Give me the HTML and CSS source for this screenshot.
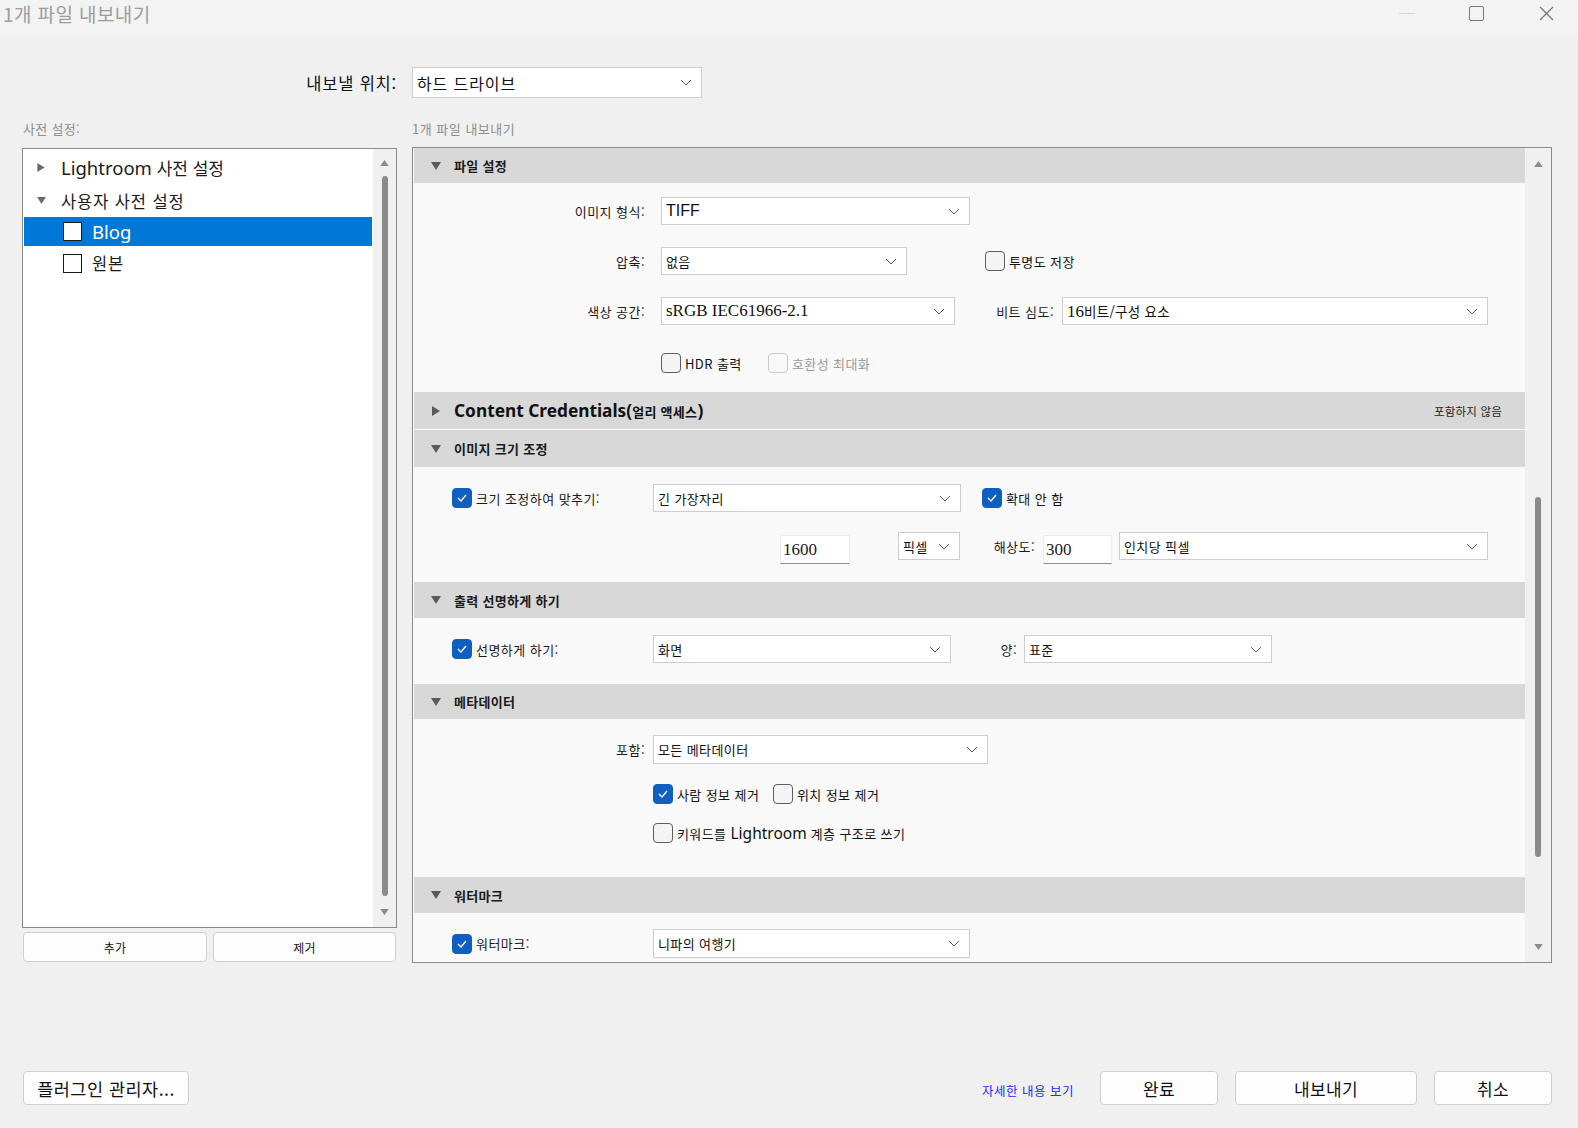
FILE: index.html
```html
<!DOCTYPE html>
<html lang="ko">
<head>
<meta charset="utf-8">
<title>1개 파일 내보내기</title>
<link rel="stylesheet" href="styles.css">
</head>
<body>
<div class="window">
  <div class="titlebar">
    <span class="title">1개 파일 내보내기</span>
    <div class="winctl">
      <span class="wc-min"></span>
      <span class="wc-max"></span>
      <svg class="wc-close" viewBox="0 0 15 15"><path d="M1 1 L14 14 M14 1 L1 14"/></svg>
    </div>
  </div>

  <div class="grid dest-row">
    <div class="dest-label">내보낼 위치:</div>
    <div class="dd dest-dd"><span>하드 드라이브</span><svg class="chev" viewBox="0 0 12 7"><polyline points="1,1 6,6 11,1"/></svg></div>
  </div>

  <div class="grid cap-row">
    <div class="cap">사전 설정:</div>
    <div class="cap cap-r">1개 파일 내보내기</div>
  </div>

  <div class="grid panels">
    <div class="left-col">
      <div class="preset-box">
        <div class="tree">
          <div class="trow r1"><svg class="ttri" viewBox="0 0 8 10"><polygon points="0,0 8,5 0,10"/></svg><span class="big">Lightroom</span><span class="kr17">&nbsp;사전 설정</span></div>
          <div class="trow r2"><svg class="ttri" viewBox="0 0 10 8"><polygon points="0,0 10,0 5,8"/></svg><span class="kr16">사용자 사전 설정</span></div>
          <div class="trow r3 sel"><span class="tcb"></span><span class="big">Blog</span></div>
          <div class="trow r4"><span class="tcb"></span><span class="kr16">원본</span></div>
        </div>
        <div class="vscroll lscroll">
          <svg class="sarrow" viewBox="0 0 10 7"><polygon points="0,7 10,7 5,0"/></svg>
          <div class="thumb lthumb"></div>
          <svg class="sarrow" viewBox="0 0 10 7"><polygon points="0,0 10,0 5,7"/></svg>
        </div>
      </div>
      <div class="preset-btns">
        <div class="btn small">추가</div>
        <div class="btn small">제거</div>
      </div>
    </div>

    <div class="settings-box">
      <div class="sections">
        <!-- 파일 설정 -->
        <div class="sh h1"><svg class="htri" viewBox="0 0 10 8"><polygon points="0,0 10,0 5,8"/></svg><span class="sh-t">파일 설정</span></div>
        <div class="sb b1">
          <div class="row ra">
            <div class="lbl w233">이미지 형식:</div>
            <div class="dd w309 ml14"><span class="sans16">TIFF</span><svg class="chev" viewBox="0 0 12 7"><polyline points="1,1 6,6 11,1"/></svg></div>
          </div>
          <div class="row rb">
            <div class="lbl w233">압축:</div>
            <div class="dd w246 ml14"><span>없음</span><svg class="chev" viewBox="0 0 12 7"><polyline points="1,1 6,6 11,1"/></svg></div>
            <div class="cbwrap ml78"><span class="cb"></span><span class="cbt">투명도 저장</span></div>
          </div>
          <div class="row rc">
            <div class="lbl w233">색상 공간:</div>
            <div class="dd w294 ml14"><span class="serif16">sRGB IEC61966-2.1</span><svg class="chev" viewBox="0 0 12 7"><polyline points="1,1 6,6 11,1"/></svg></div>
            <div class="lbl w101">비트 심도:</div>
            <div class="dd w426 ml6"><span><span class="serif16">16</span><span class="kr14">비트/구성 요소</span></span><svg class="chev" viewBox="0 0 12 7"><polyline points="1,1 6,6 11,1"/></svg></div>
          </div>
          <div class="row rd pl247">
            <div class="cbwrap w107"><span class="cb"></span><span class="cbt hdr">HDR</span><span class="cbt">&nbsp;출력</span></div>
            <div class="cbwrap"><span class="cb dis"></span><span class="cbt dist">호환성 최대화</span></div>
          </div>
        </div>

        <!-- Content Credentials -->
        <div class="sh h2"><svg class="htri r" viewBox="0 0 8 10"><polygon points="0,0 8,5 0,10"/></svg><span class="sh-t cc">Content Credentials(<span class="ccs">얼리 액세스</span>)</span><span class="sh-right">포함하지 않음</span></div>

        <!-- 이미지 크기 조정 -->
        <div class="sh h3"><svg class="htri" viewBox="0 0 10 8"><polygon points="0,0 10,0 5,8"/></svg><span class="sh-t">이미지 크기 조정</span></div>
        <div class="sb b3">
          <div class="row r3a pl38">
            <span class="cb on"><svg viewBox="0 0 12 10"><polyline points="2,5 5,8 10,2"/></svg></span>
            <div class="lbl-l w181">크기 조정하여 맞추기:</div>
            <div class="dd w308"><span>긴 가장자리</span><svg class="chev" viewBox="0 0 12 7"><polyline points="1,1 6,6 11,1"/></svg></div>
            <div class="cbwrap ml21"><span class="cb on"><svg viewBox="0 0 12 10"><polyline points="2,5 5,8 10,2"/></svg></span><span class="cbt">확대 안 함</span></div>
          </div>
          <div class="row r3b pl366">
            <div class="inp w70 mt3"><span class="serif16">1600</span></div>
            <div class="dd w62 ml48"><span>픽셀</span><svg class="chev" viewBox="0 0 12 7"><polyline points="1,1 6,6 11,1"/></svg></div>
            <div class="lbl w77 h28">해상도:</div>
            <div class="inp w69 ml6 mt3"><span class="serif16">300</span></div>
            <div class="dd w369 ml7"><span>인치당 픽셀</span><svg class="chev" viewBox="0 0 12 7"><polyline points="1,1 6,6 11,1"/></svg></div>
          </div>
        </div>

        <!-- 출력 선명하게 하기 -->
        <div class="sh h4"><svg class="htri" viewBox="0 0 10 8"><polygon points="0,0 10,0 5,8"/></svg><span class="sh-t">출력 선명하게 하기</span></div>
        <div class="sb b4">
          <div class="row r4a pl38">
            <span class="cb on"><svg viewBox="0 0 12 10"><polyline points="2,5 5,8 10,2"/></svg></span>
            <div class="lbl-l w181">선명하게 하기:</div>
            <div class="dd w298"><span>화면</span><svg class="chev" viewBox="0 0 12 7"><polyline points="1,1 6,6 11,1"/></svg></div>
            <div class="lbl w68">양:</div>
            <div class="dd w248 ml5"><span>표준</span><svg class="chev" viewBox="0 0 12 7"><polyline points="1,1 6,6 11,1"/></svg></div>
          </div>
        </div>

        <!-- 메타데이터 -->
        <div class="sh h5"><svg class="htri" viewBox="0 0 10 8"><polygon points="0,0 10,0 5,8"/></svg><span class="sh-t">메타데이터</span></div>
        <div class="sb b5">
          <div class="row r5a">
            <div class="lbl w233">포함:</div>
            <div class="dd w335 ml6"><span>모든 메타데이터</span><svg class="chev" viewBox="0 0 12 7"><polyline points="1,1 6,6 11,1"/></svg></div>
          </div>
          <div class="row r5b pl239">
            <div class="cbwrap w120"><span class="cb on"><svg viewBox="0 0 12 10"><polyline points="2,5 5,8 10,2"/></svg></span><span class="cbt">사람 정보 제거</span></div>
            <div class="cbwrap"><span class="cb"></span><span class="cbt">위치 정보 제거</span></div>
          </div>
          <div class="row r5c pl239">
            <div class="cbwrap"><span class="cb"></span><span class="cbt">키워드를 <span class="lr16">Lightroom</span> 계층 구조로 쓰기</span></div>
          </div>
        </div>

        <!-- 워터마크 -->
        <div class="sh h6"><svg class="htri" viewBox="0 0 10 8"><polygon points="0,0 10,0 5,8"/></svg><span class="sh-t">워터마크</span></div>
        <div class="sb b6">
          <div class="row r6a pl38">
            <span class="cb on"><svg viewBox="0 0 12 10"><polyline points="2,5 5,8 10,2"/></svg></span>
            <div class="lbl-l w181">워터마크:</div>
            <div class="dd w317"><span>니파의 여행기</span><svg class="chev" viewBox="0 0 12 7"><polyline points="1,1 6,6 11,1"/></svg></div>
          </div>
        </div>
      </div>
      <div class="vscroll rscroll">
        <svg class="sarrow" viewBox="0 0 10 7"><polygon points="0,7 10,7 5,0"/></svg>
        <div class="thumb rthumb"></div>
        <svg class="sarrow rdown" viewBox="0 0 10 7"><polygon points="0,0 10,0 5,7"/></svg>
      </div>
    </div>
  </div>

  <div class="footer">
    <div class="btn big-btn plugin">플러그인 관리자...</div>
    <div class="spacer"></div>
    <div class="link">자세한 내용 보기</div>
    <div class="btn big-btn done">완료</div>
    <div class="btn big-btn export">내보내기</div>
    <div class="btn big-btn cancel">취소</div>
  </div>
</div>
</body>
</html>
```

FILE: styles.css
```css
* { box-sizing: border-box; }
html, body { margin: 0; padding: 0; }
body {
  width: 1578px;
  height: 1128px;
  overflow: hidden;
  background: #f0f0f0;
  font-family: "Noto Sans", "Noto Sans CJK KR", sans-serif;
  color: #1b1b1b;
}
.window { width: 1578px; height: 1128px; }

/* title bar */
.titlebar {
  height: 36px;
  background: #f3f3f3;
  display: flex;
  align-items: center;
  justify-content: space-between;
  padding-left: 3px;
}
.title {
  font-family: "Noto Sans CJK KR", sans-serif;
  font-size: 19px;
  color: #9d9d9d;
  letter-spacing: 0.4px;
  margin-top: -10px;
}
.winctl {
  display: flex;
  align-items: center;
  height: 36px;
  margin-top: -9px;
}
.wc-min { width: 16px; height: 1px; background: #d6d6d6; margin-right: 54px; }
.wc-max { width: 15px; height: 15px; border: 1.5px solid #7a7a7a; border-radius: 2px; margin-right: 55px; }
.wc-close { width: 15px; height: 15px; margin-right: 24px; }
.wc-close path { stroke: #7a7a7a; stroke-width: 1.3; fill: none; }

/* shared grid */
.grid {
  display: grid;
  grid-template-columns: 375px 1140px;
  column-gap: 15px;
  padding-left: 22px;
}

.dest-row { margin-top: 31px; height: 31px; align-items: center; }
.dest-label {
  text-align: right;
  font-family: "Noto Sans CJK KR", sans-serif;
  font-size: 16.5px;
  letter-spacing: 0.8px;
  color: #111;
}
.dd.dest-dd { width: 290px; height: 31px; font-size: 16px; letter-spacing: 0.9px; }

.cap-row { margin-top: 21px; height: 18px; align-items: center; }
.cap {
  font-family: "Noto Sans CJK KR", sans-serif;
  font-size: 13px;
  letter-spacing: 0.3px;
  color: #8e8e8e;
  padding-left: 1px;
}
.cap-r { letter-spacing: 0.5px; padding-left: 0; }

.panels { margin-top: 10px; align-items: start; }

/* left */
.preset-box {
  margin-top: 1px;
  height: 780px;
  border: 1px solid #8a8a8a;
  background: #fff;
  display: flex;
}
.tree { width: 350px; padding: 2px 1px 0 1px; }
.trow {
  display: flex;
  align-items: center;
  height: 33px;
  font-family: "Noto Sans CJK KR", sans-serif;
  white-space: nowrap;
}
.trow.r3 { height: 29px; }
.trow.r4 { height: 34px; }
.ttri { width: 8px; height: 9px; margin-left: 13px; margin-right: 16px; fill: #6a6a6a; }
.trow.r2 .ttri { width: 9px; height: 7px; margin-left: 13px; margin-right: 15px; }
.big { font-family: "Noto Sans", sans-serif; font-size: 18.5px; }
.kr17 { font-size: 17px; }
.kr16 { font-size: 16.5px; letter-spacing: 0.9px; }
.sel { background: #0078d7; color: #fff; }
.tcb {
  width: 19px; height: 19px;
  border: 1.5px solid #1a1a1a;
  background: #fff;
  margin-left: 39px;
  margin-right: 10px;
  flex: none;
}

.vscroll {
  background: #f0f0f0;
  display: flex;
  flex-direction: column;
  align-items: center;
}
.lscroll { width: 23px; padding: 11px 0 8px; }
.sarrow { width: 9px; height: 6px; fill: #8a8a8a; flex: none; }
.thumb { width: 6px; background: #8a8a8a; border-radius: 3px; }
.lthumb { height: 720px; margin-top: 10px; }
.lscroll .sarrow:last-child { margin-top: 13px; }

.preset-btns { display: flex; gap: 6px; margin-top: 4px; padding-left: 1px; }
.btn {
  background: #fdfdfd;
  border: 1px solid #cfcfcf;
  border-radius: 4px;
  display: flex;
  align-items: center;
  justify-content: center;
  font-family: "Noto Sans CJK KR", sans-serif;
  color: #111;
}
.btn.small { width: 184px; height: 30px; font-size: 12px; letter-spacing: 0.3px; }
.btn.small + .btn.small { width: 183px; }

/* right */
.settings-box {
  height: 816px;
  border: 1px solid #8a8a8a;
  background: #f9f9f9;
  display: flex;
  overflow: hidden;
}
.sections { width: 1112px; padding-left: 1px; flex: none; }
.rscroll { width: 26px; padding: 13px 0 0; flex: none; }
.rthumb { height: 360px; margin-top: 330px; }
.rdown { margin-top: 87px; }

.sh {
  background: #d8d8d8;
  display: flex;
  align-items: center;
  height: 36px;
  padding-left: 17px;
}
.h1 { height: 35px; }
.h2 { height: 37px; }
.h3 { height: 37px; margin-top: 1px; }
.h5 { height: 35px; }
.htri { width: 10px; height: 8px; fill: #5a5a5a; margin-right: 13px; flex: none; }
.htri.r { width: 8px; height: 10px; margin-left: 1px; margin-right: 14px; }
.sh-t {
  font-family: "Noto Sans CJK KR", sans-serif;
  font-size: 13px;
  letter-spacing: 0.3px;
  font-weight: 700;
  color: #1a1a1a;
}
.sh-t.cc { font-family: "Noto Sans", "Noto Sans CJK KR", sans-serif; font-size: 17.3px; letter-spacing: 0; font-weight: 700; color: #111; }
.ccs { font-family: "Noto Sans CJK KR", sans-serif; font-size: 13px; letter-spacing: 0.3px; font-weight: 700; }
.sh-right {
  margin-left: auto;
  margin-right: 23px;
  font-family: "Noto Sans CJK KR", sans-serif;
  font-size: 11.5px;
  letter-spacing: 0.2px;
  color: #222;
}

.row { display: flex; align-items: center; }
.lbl {
  text-align: right;
  font-family: "Noto Sans CJK KR", sans-serif;
  font-size: 13px;
  letter-spacing: 0.45px;
  padding-right: 2px;
  white-space: nowrap;
  flex: none;
}
.lbl-l {
  font-family: "Noto Sans CJK KR", sans-serif;
  font-size: 13px;
  letter-spacing: 0.45px;
  padding-left: 4px;
  white-space: nowrap;
  flex: none;
}

/* section 1 */
.b1 { padding-top: 14px; padding-bottom: 18px; }
.b1 .ra { height: 28px; }
.b1 .rb { height: 28px; margin-top: 22px; }
.b1 .rc { height: 28px; margin-top: 22px; }
.b1 .rd { height: 22px; margin-top: 27px; }

/* section 3 */
.b3 { padding-top: 17px; padding-bottom: 18px; }
.r3a { height: 28px; }
.r3b { height: 32px; margin-top: 20px; align-items: flex-start; }
.h28 { height: 28px; display: flex; align-items: center; justify-content: flex-end; }

/* section 4 */
.b4 { padding-top: 17px; padding-bottom: 21px; }
.r4a { height: 28px; }

/* section 5 */
.b5 { padding-top: 16px; padding-bottom: 33px; }
.r5a { height: 29px; }
.r5b { height: 22px; margin-top: 19px; }
.r5c { height: 22px; margin-top: 17px; }

/* section 6 */
.b6 { padding-top: 16px; }
.r6a { height: 29px; }

/* widths / spacing */
.w233 { width: 233px; }
.w101 { width: 101px; }
.w181 { width: 181px; }
.w77 { width: 77px; }
.w68 { width: 68px; }
.w69 { width: 69px; }
.w70 { width: 70px; }
.w107 { width: 107px; }
.w120 { width: 120px; }
.w309 { width: 309px; }
.w246 { width: 246px; }
.w294 { width: 294px; }
.w426 { width: 426px; }
.w308 { width: 308px; }
.w62 { width: 62px; }
.w369 { width: 369px; }
.w298 { width: 298px; }
.w248 { width: 248px; }
.w335 { width: 335px; }
.w317 { width: 317px; }
.ml5 { margin-left: 5px; }
.ml6 { margin-left: 6px; }
.ml7 { margin-left: 7px; }
.ml14 { margin-left: 14px; }
.ml21 { margin-left: 21px; }
.ml48 { margin-left: 48px; }
.ml78 { margin-left: 78px; }
.mt3 { margin-top: 3px; }
.pl38 { padding-left: 38px; }
.pl239 { padding-left: 239px; }
.pl247 { padding-left: 247px; }
.pl366 { padding-left: 366px; }

/* dropdown */
.dd {
  height: 28px;
  background: #fff;
  border: 1px solid #cdcdcd;
  display: flex;
  align-items: center;
  justify-content: space-between;
  padding: 0 9px 0 4px;
  font-family: "Noto Sans CJK KR", sans-serif;
  font-size: 13px;
  letter-spacing: 0.4px;
  color: #111;
  white-space: nowrap;
  flex: none;
}
.r5a .dd, .r6a .dd { height: 29px; }
.chev { width: 12px; height: 7px; flex: none; }
.chev polyline { fill: none; stroke: #5c5c5c; stroke-width: 1; }
.sans16 { font-family: "Liberation Sans", sans-serif; font-size: 16px; letter-spacing: 0; }
.serif16 { font-family: "Liberation Serif", serif; font-size: 17px; letter-spacing: 0; }
.kr14 { font-size: 13.5px; letter-spacing: 0.3px; }
.hdr { font-family: "Noto Sans", sans-serif; font-size: 16.5px; letter-spacing: 0; }
.lr16 { font-family: "Noto Sans", sans-serif; font-size: 15.5px; letter-spacing: 0; }

/* input */
.inp {
  height: 29px;
  background: #fff;
  border: 1px solid #ececec;
  border-bottom: 1px solid #8c8c8c;
  display: flex;
  align-items: center;
  padding-left: 2px;
  flex: none;
}

/* checkboxes */
.cbwrap { display: flex; align-items: center; flex: none; }
.cb {
  width: 20px; height: 20px;
  border: 1px solid #5e5e5e;
  border-radius: 4px;
  background: #f4f4f4;
  flex: none;
  display: flex;
  align-items: center;
  justify-content: center;
}
.cb.on { background: #0f5fc0; border-color: #0f5fc0; }
.cb.on svg { width: 12px; height: 10px; }
.cb.on polyline { fill: none; stroke: #fff; stroke-width: 1.3; }
.cb.dis { border-color: #cbcbcb; background: #f8f8f8; }
.cbt {
  font-family: "Noto Sans CJK KR", sans-serif;
  font-size: 13px;
  letter-spacing: 0.4px;
  color: #111;
  margin-left: 4px;
  white-space: nowrap;
}
.cbt + .cbt { margin-left: 0; }
.dist { color: #9a9a9a; }

/* footer */
.footer {
  display: flex;
  align-items: center;
  margin-top: 108px;
  height: 34px;
  padding-left: 23px;
  padding-right: 26px;
}
.spacer { flex: 1; }
.big-btn { height: 34px; font-size: 17px; letter-spacing: 0.3px; }
.plugin { width: 166px; font-size: 17.5px; letter-spacing: 0.5px; }
.link {
  font-family: "Noto Sans CJK KR", sans-serif;
  font-size: 12.5px;
  letter-spacing: 0.5px;
  color: #2828ff;
  margin-right: 26px;
  margin-top: 4px;
}
.done { width: 118px; }
.export { width: 182px; margin-left: 17px; }
.cancel { width: 118px; margin-left: 17px; }
```
